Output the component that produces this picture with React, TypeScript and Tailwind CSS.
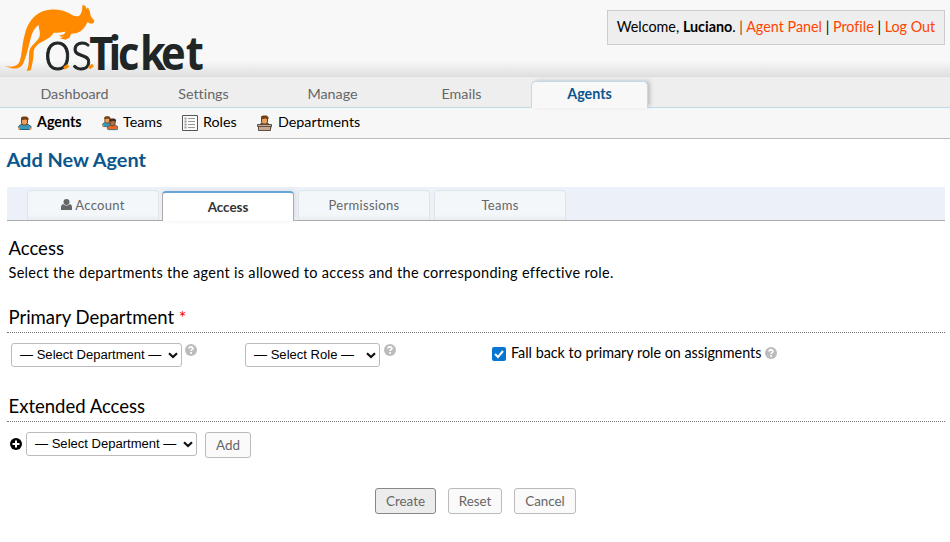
import React from "react";

function Logo() {
  return (
    <svg className="block h-[76px] w-[220px] overflow-visible" viewBox="0 0 660 228" aria-label="osTicket">
      <path
        fill="#ff8a00"
        d="M15 197C33 202 50 202 58 187C66 166 66 132 74 104C82 71 99 46 128 34C155 25 186 27 208 40C219 49 231 50 238 47C244 40 247 31 247 20L248 14L256 18L260 27L264 22L270 35L272 48L283 62L281 69L273 71L262 67C256 82 244 96 228 100L214 101L208 113L196 119L179 115L192 110L184 110L177 107L192 103L197 95C184 96 170 99 161 98C154 111 138 119 125 126C111 133 101 145 101 157C101 176 97 193 92 211L80 213L83 205C89 187 85 164 89 149C95 134 114 124 119 108C122 96 116 88 116 75C102 83 95 102 90 123C84 146 79 170 70 190C60 211 37 208 15 197Z"
      />
      <text fill="#202526" y="209" transform="scale(.88 1)">
        <tspan x="150 243" fontFamily="Lato" fontWeight="300" fontSize="167" stroke="#202526" strokeWidth="3">os</tspan>
        <tspan x="304 370 402 477 549 633" fontFamily="Open Sans" fontWeight="700" fontSize="142">Ticket</tspan>
      </text>
      <path stroke="#ff8a00" strokeWidth="10" d="M192 205L205 196M267 204L279 195" />
    </svg>
  );
}

function Person({ x = 0, y = 0, skin = "#e8a063", shirt = "#3b98bd", hair = "#74400f" }) {
  return (
    <g transform={`translate(${x} ${y})`}>
      <path d="M.5 12.5V10.5L3 8.5h7l3 2v2l-2 1H2z" fill={shirt} stroke="#285f78" />
      <path d="M0 11.5h2v2H0zM11.5 11.5h2v2h-2z" fill={skin} />
      <path d="M3.5 3h6v4L8 9H5L3.5 7z" fill={skin} stroke="#713d16" />
      <path d="M3 4V1.5l2-1h3.5l2 1.5v2H9L7 3 5 4z" fill={hair} />
    </g>
  );
}

function AgentIcon() {
  return <svg className="h-4 w-4" viewBox="0 0 16 16"><Person x={1} y={1} /></svg>;
}

function TeamsIcon() {
  return (
    <svg className="h-4 w-4" viewBox="0 0 16 16">
      <g transform="scale(.8)"><Person x={0} y={1} /></g>
      <g transform="translate(5 3) scale(.86)"><Person skin="#ad7046" shirt="#ef6522" hair="#402a20" /></g>
    </svg>
  );
}

function RolesIcon() {
  return (
    <svg className="h-4 w-4" viewBox="0 0 16 16" fill="none">
      <path d="M.5.5h15v15H.5z" fill="#fafafa" stroke="#555" />
      <path d="M6 3.5h7M6 6.5h7M6 9.5h7M6 12.5h7" stroke="#999" />
      <path d="M2.5 3.5h2M2.5 6.5h2M2.5 9.5h2M2.5 12.5h2" stroke="#999" strokeWidth="2" />
    </svg>
  );
}

function DeskIcon() {
  return (
    <svg className="h-4 w-[15px]" viewBox="0 0 15 16">
      <Person x={1} y={0} shirt="#e47c2b" />
      <path d="M.5 9.5h14v2h-1v4h-12v-4h-1z" fill="#c9a78d" stroke="#5b5048" />
      <path d="M1 11.5h13" stroke="#5b5048" />
    </svg>
  );
}

function Help({ className = "" }: { className?: string }) {
  return (
    <svg className={`h-3 w-3 shrink-0 ${className}`} viewBox="0 0 12 12" fill="none">
      <circle cx="6" cy="6" r="6" fill="#bcbcbc" />
      <path d="M4 4.5C4.2 2.2 8 2.4 7.9 4.5C7.8 5.8 6.1 5.5 6.1 7" stroke="#fff" strokeWidth="1.7" />
      <path d="M5.2 8h1.8v1.7H5.2z" fill="#fff" />
    </svg>
  );
}

function SelectBox({ label, className }: { label: string; className: string }) {
  return (
    <button className={`flex h-6 shrink-0 items-center justify-between rounded-[3px] border border-[#bbb] bg-white pr-[3px] pl-2 font-['Liberation_Sans',Arial,sans-serif] text-[13.05px] leading-4 whitespace-nowrap text-black ${className}`}>
      <span>{label}</span>
      <svg className="h-[7px] w-[10px] shrink-0" viewBox="0 0 10 7"><path d="M1 1.2L5 5L9 1.2" fill="none" stroke="#111" strokeWidth="2.2" /></svg>
    </button>
  );
}

const formTab = "flex h-[30px] w-[132px] items-center justify-center rounded-t-[5px] border border-b-0 border-[#dfe4e6] bg-gradient-to-b from-[#f3f7fa] from-80% to-[#e9edf0] pb-[2px] text-[13px] tracking-[0.3px] text-[#666]";
const button = "flex h-[26px] items-center justify-center rounded-[3px] border border-[#bbb] bg-[#fafafa] pb-[1px] text-[13.4px] leading-4 text-[#666]";
const mainTab = "flex w-[129px] justify-center pt-[8px] leading-[18px]";
const sectionTitle = "border-b border-dotted border-[#777] pl-[1.5px] text-[18.5px]";

export default function App() {
  return (
    <main className="h-[542px] w-[950px] overflow-hidden bg-white font-[Lato,sans-serif] text-[14.4px] leading-[18px] text-black [font-variant-ligatures:none]">
      <header className="flex h-[77px] items-start justify-between border-b border-[#ddd] bg-gradient-to-b from-[#f8f8f8] from-80% to-[#e0e0e0] pr-[5px]">
        <Logo />
        <div className="mt-[10px] flex h-[35px] w-[338px] items-center justify-center border border-[#ccc] bg-[#eee] pb-[2px] text-[14.35px] whitespace-pre">
          <span>Welcome, <strong>Luciano</strong>. <span className="text-[#943515]">|</span> <a className="text-[#ff4500]">Agent Panel</a> | <a className="text-[#ff4500]">Profile</a> | <a className="text-[#ff4500]">Log Out</a></span>
        </div>
      </header>
      <nav className="flex h-[31px] border-b border-[#c0daec] bg-[#eee] pl-[10px] text-[14.3px] text-[#666]">
        <a className={mainTab}>Dashboard</a><a className={mainTab}>Settings</a><a className={mainTab}>Manage</a><a className={mainTab}>Emails</a>
        <a className="-mb-px mt-[4px] ml-[5px] flex h-[27px] w-[117px] justify-center rounded-t-[5px] border border-b-0 border-[#c0daec] bg-[#f8f8f8] pt-[3px] font-bold text-[#0a568e] shadow-[3px_-1px_4px_-1px_#bbb]">Agents</a>
      </nav>
      <nav className="flex h-[31px] items-center border-b border-[#bbb] bg-[#f7f7f7] pl-[17px] text-[14.3px]">
        <a className="flex w-[85px] items-center gap-1 font-bold"><AgentIcon /><span className="-mt-[2px]">Agents</span></a>
        <a className="flex w-[80px] items-center gap-[5px]"><TeamsIcon /><span className="-mt-[2px]">Teams</span></a>
        <a className="flex w-[75px] items-center gap-[5px]"><RolesIcon /><span className="-mt-[2px]">Roles</span></a>
        <a className="flex items-center gap-[6px]"><DeskIcon /><span className="-mt-[2px]">Departments</span></a>
      </nav>
      <div className="pr-[5px] pl-[7px]">
        <h1 className="-ml-[0.5px] pt-[8px] text-[19.9px] leading-6 font-bold text-[#0a568e]">Add New Agent</h1>
        <div className="mt-[16px] flex h-[34px] items-end border-b border-[#aaa] bg-[#ecf1f9] pl-5">
          <a className={formTab}><svg className="mr-[3px] h-[11px] w-[11px]" viewBox="0 0 11 11" fill="#666"><circle cx="5.5" cy="3" r="3" /><path d="M0 11V8q0-2 2-3q3.5 3 7 0q2 1 2 3v3z" /></svg>Account</a>
          <a className="mr-1 ml-[3px] -mb-px flex h-[30px] w-[132px] items-center justify-center rounded-t-[4px] border border-t-2 border-b-0 border-[#aaa] border-t-[#67a5d7] bg-white text-[13.4px] font-bold text-[#333] shadow-[2px_-1px_5px_#dce1e7]">Access</a>
          <a className={formTab}>Permissions</a>
          <a className={`${formTab} ml-1`}>Teams</a>
        </div>
        <section>
          <h2 className="pt-[16px] pl-[1.5px] text-[18.5px] leading-[23px]">Access</h2>
          <p className="pt-1 pl-[1.5px] text-[14.5px] leading-[18px] tracking-[0.31px]">Select the departments the agent is allowed to access and the corresponding effective role.</p>
          <h2 className={`mt-[23px] h-[28px] leading-[25px] ${sectionTitle}`}>Primary Department <span className="text-[18px] text-[#f00]">*</span></h2>
          <div className="flex h-[62px] items-start pt-[10px] pl-1">
            <SelectBox label="— Select Department —" className="w-[171px]" />
            <Help className="mt-[1px] mr-[48px] ml-[3px]" />
            <SelectBox label="— Select Role —" className="w-[135px]" />
            <Help className="mt-[1px] ml-1" />
            <label className="ml-24 flex items-center pt-[1px] text-[14.33px]">
              <svg className="mt-[1px] mr-[5px] h-[14px] w-[14px]" viewBox="0 0 14 14"><rect width="14" height="14" rx="2" fill="#0875d1" /><path d="M3 7l3 3l5-6" fill="none" stroke="#fff" strokeWidth="2" /></svg>
              <span>Fall back to primary role on assignments</span><Help className="ml-1" />
            </label>
          </div>
          <h2 className={`h-[27px] leading-[23px] ${sectionTitle}`}>Extended Access</h2>
          <div className="flex items-start pt-[10px] pl-[3px]">
            <svg className="mt-[6px] mr-1 h-3 w-3" viewBox="0 0 12 12"><circle cx="6" cy="6" r="6" fill="#000" /><path d="M6 2.5v7M2.5 6h7" stroke="#fff" strokeWidth="2" /></svg>
            <SelectBox label="— Select Department —" className="w-[171px]" />
            <button className={`${button} ml-2 w-[46px]`}>Add</button>
          </div>
        </section>
        <div className="mt-[30px] flex gap-3 pl-[368px]">
          <button className="flex h-[26px] w-[61px] items-center justify-center rounded-[3px] border border-[#888] bg-[#ececec] pb-[1px] text-[13.4px] leading-4 text-[#666]">Create</button>
          <button className={`${button} w-[54px]`}>Reset</button>
          <button className={`${button} w-[62px]`}>Cancel</button>
        </div>
      </div>
    </main>
  );
}
